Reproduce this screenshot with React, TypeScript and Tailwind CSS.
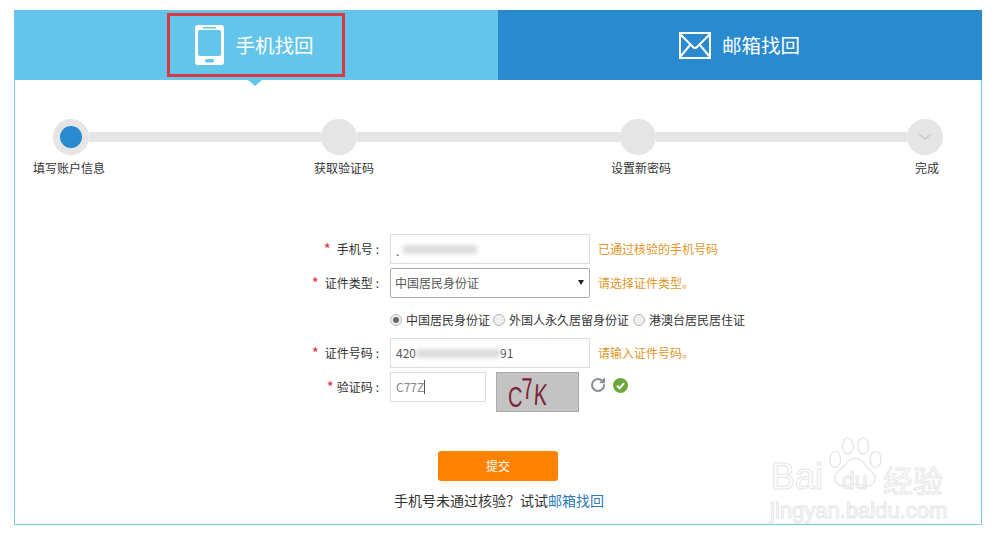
import { RotateCw } from "lucide-react";

const cjk = "font-['Noto_Sans_CJK_SC','Liberation_Sans',sans-serif]";

const PhoneIcon = () => (
  <svg width="29" height="40" viewBox="0 0 29 40">
    <rect x="0" y="0" width="29" height="40" rx="3" fill="#ffffff" />
    <rect x="3" y="5" width="23" height="26" rx="2" fill="#63c5ea" />
    <rect x="8" y="2" width="13" height="1.5" fill="#63c5ea" />
    <rect x="10" y="34" width="9" height="3.5" rx="1.5" fill="#63c5ea" />
  </svg>
);

const MailIcon = () => (
  <svg width="32" height="27" viewBox="0 0 32 27" fill="none" stroke="#ffffff" strokeWidth="2">
    <rect x="1" y="1" width="30" height="25" />
    <path d="M1 2 L14 15 Q16 17 18 15 L31 2" />
    <path d="M1 25 L11.5 12.5 M31 25 L20.5 12.5" />
  </svg>
);

const CheckBadge = () => (
  <svg width="15" height="15" viewBox="0 0 15 15">
    <circle cx="7.5" cy="7.5" r="7.5" fill="#6aa838" />
    <path d="M4 7.8 L6.6 10.2 L11 5.2" fill="none" stroke="#ffffff" strokeWidth="2" />
  </svg>
);

const Blur = ({ w }: { w: string }) => <span className={`${w} h-[9px] bg-[#dcdcdc] blur-[2px]`} />;

const Field = ({
  label,
  gap,
  children,
  className,
}: {
  label: string;
  gap: string;
  children: React.ReactNode;
  className: string;
}) => (
  <div className={`flex items-center ${className}`}>
    <div className="w-[365px] flex justify-end items-center text-[12px] text-[#333]">
      <span className={`text-[#e0333c] text-[15px] ${gap}`}>*</span>
      <span>{label}</span>
      <span className="ml-[3px] mr-px">:</span>
    </div>
    <div className="ml-[10px] flex items-center">{children}</div>
  </div>
);

const Hint = ({ children }: { children: React.ReactNode }) => (
  <span className="ml-2 text-[12px] text-[#e0972a]">{children}</span>
);

const Radio = ({ on, label, className }: { on?: boolean; label: string; className: string }) => (
  <div className={`flex items-center ${className}`}>
    <span className="w-3 h-3 rounded-full border border-[#b5b5b5] bg-[#f0f0f0] flex items-center justify-center">
      {on && <span className="w-[6px] h-[6px] rounded-full bg-[#666]" />}
    </span>
    <span className="ml-[4px] text-[12px] text-[#333]">{label}</span>
  </div>
);

export default function App() {
  return (
    <div className={`relative w-[1000px] h-[544px] bg-white pt-[10px] pl-[14px] overflow-hidden ${cjk}`}>
      <div className="w-[968px]">
        {/* tabs */}
        <div className="flex h-[70px]">
          <div className="relative w-[484px] pr-[3px] bg-[#63c5ea] flex items-center justify-center gap-[11px] text-white text-[19.5px]">
            <PhoneIcon />
            <span>手机找回</span>
            <div className="absolute left-[153px] top-[3px] w-[178px] h-[64px] border-[3px] border-[#d9393f]" />
            <div className="absolute left-[234px] top-[70px] border-x-[7px] border-x-transparent border-t-[6px] border-t-[#63c5ea]" />
          </div>
          <div className="w-[484px] pr-[1px] bg-[#2a8ad0] flex items-center justify-center gap-[11px] text-white text-[19.5px]">
            <MailIcon />
            <span>邮箱找回</span>
          </div>
        </div>

        {/* body */}
        <div className="h-[445px] border-x border-b border-[#82cbe4]">
          <div className="flex items-center ml-[38px] pt-[39px]">
            <div className="w-9 h-9 rounded-full bg-[#e5e5e5] flex items-center justify-center">
              <span className="w-[22px] h-[22px] rounded-full bg-[#2a8ad0]" />
            </div>
            <div className="w-[232px] h-[10px] bg-[#e5e5e5]" />
            <div className="w-9 h-9 rounded-full bg-[#e5e5e5]" />
            <div className="w-[263px] h-[10px] bg-[#e5e5e5]" />
            <div className="w-9 h-9 rounded-full bg-[#e5e5e5]" />
            <div className="w-[251px] h-[10px] bg-[#e5e5e5]" />
            <div className="w-9 h-9 rounded-full bg-[#e5e5e5] flex items-center justify-center">
              <svg width="14" height="8" viewBox="0 0 14 8" fill="none" stroke="#c9c9c9" strokeWidth="1.5">
                <path d="M1 1 L7 6 L13 1" />
              </svg>
            </div>
          </div>

          <div className="flex mt-1 h-[18px] text-[12px] leading-[18px] text-[#333]">
            <span className="ml-[18px] w-[72px]">填写账户信息</span>
            <span className="ml-[209px] w-[60px]">获取验证码</span>
            <span className="ml-[237px] w-[60px]">设置新密码</span>
            <span className="ml-[244px]">完成</span>
          </div>

          {/* form */}
          <div className="mt-[57px]">
            <Field label="手机号" gap="mr-[6px]" className="h-[30px]">
              <div className="w-[200px] h-[30px] border border-[#ddd] flex items-center pl-[5px] text-[12px] text-[#555]">
                <span className="mr-[4px] mt-1">.</span>
                <Blur w="w-[74px]" />
              </div>
              <Hint>已通过核验的手机号码</Hint>
            </Field>

            <Field label="证件类型" gap="mr-[6px]" className="h-[30px] mt-1">
              <div className="relative">
                <select className="appearance-none w-[200px] h-[30px] border border-[#aaa] rounded-[2px] pl-1 text-[12px] text-[#555] bg-white">
                  <option>中国居民身份证</option>
                </select>
                <span className="absolute right-[6px] top-[12px] border-x-[3px] border-x-transparent border-t-[5px] border-t-[#222]" />
              </div>
              <Hint>请选择证件类型。</Hint>
            </Field>

            <div className="flex items-center h-[18px] mt-[13px] ml-[375px]">
              <Radio on label="中国居民身份证" className="" />
              <Radio label="外国人永久居留身份证" className="ml-[3px]" />
              <Radio label="港澳台居民居住证" className="ml-[4px]" />
            </div>

            <Field label="证件号码" gap="mr-[6px]" className="h-[30px] mt-[9px]">
              <div className="w-[200px] h-[30px] border border-[#ddd] flex items-center pl-[5px] text-[12px] text-[#555]">
                <span>420</span>
                <Blur w="w-[84px]" />
                <span>91</span>
              </div>
              <Hint>请输入证件号码。</Hint>
            </Field>

            <Field label="验证码" gap="mr-[3px]" className="h-[30px] mt-1">
              <div className="w-24 h-[30px] border border-[#ddd] flex items-center pl-[5px] text-[12px] text-[#888]">
                <span>C77Z</span>
                <span className="w-px h-[14px] bg-[#555]" />
              </div>
              <div className="h-[30px] self-start">
                <div className="ml-[10px] w-[83px] h-10 bg-[#c3c3c3] border border-[#aaa] flex items-center pl-[11px] text-[#7a2436] font-['Liberation_Sans',sans-serif] text-[20px] leading-none">
                  <span className="translate-y-[4px] scale-y-150">C</span>
                  <span className="-translate-y-[4px] skew-x-6 scale-y-150">7</span>
                  <span className="translate-y-[2px] -skew-x-6 scale-y-150">K</span>
                </div>
              </div>
              <RotateCw size={16} strokeWidth={3} color="#868e96" className="ml-[11px] -mt-[5px]" />
              <span className="ml-[7px] -mt-[3px]">
                <CheckBadge />
              </span>
            </Field>

            <div className="mt-[49px] ml-[423px] w-[120px] h-[30px] rounded-[3px] bg-[#ff8200] flex items-center justify-center text-[12px] text-white">
              提交
            </div>
            <div className="mt-[9px] ml-[379px] h-5 leading-5 text-[14px] text-[#333] whitespace-nowrap">
              手机号未通过核验{"\uFF1F"}试试<span className="text-[#2a7ab5]">邮箱找回</span>
            </div>
          </div>
        </div>
      </div>

      {/* baidu watermark */}
      <div className="absolute left-[768px] top-[436px] w-[185px] h-[90px] text-transparent [-webkit-text-stroke:1px_#e6e6e6]">
        <svg className="absolute left-[59px] top-px" width="56" height="52" viewBox="0 0 62 58" fill="#ffffff" stroke="#e6e6e6" strokeWidth="1.5">
          <ellipse cx="9" cy="25" rx="6" ry="9" />
          <ellipse cx="23" cy="10" rx="6" ry="9" />
          <ellipse cx="40" cy="10" rx="6" ry="9" />
          <ellipse cx="54" cy="25" rx="6" ry="9" />
          <path d="M31 24 C22 24 20 33 13 38 C4 46 10 56 21 54 C27 52 35 52 41 54 C52 56 58 46 49 38 C42 33 40 24 31 24 Z" />
        </svg>
        <span className="absolute left-[3px] top-[21px] text-[36px] leading-[40px] font-['Liberation_Sans',sans-serif]">Bai</span>
        <span className="absolute left-[74px] top-[33px] text-[23px] leading-[24px] font-['Liberation_Sans',sans-serif]">du</span>
        <span className="absolute left-[115px] top-[27px] text-[30px] leading-[32px]">经验</span>
        <span className="absolute left-[2px] top-[63px] text-[22px] leading-[24px] whitespace-nowrap font-['Liberation_Sans',sans-serif]">jingyan.baidu.com</span>
      </div>
    </div>
  );
}
